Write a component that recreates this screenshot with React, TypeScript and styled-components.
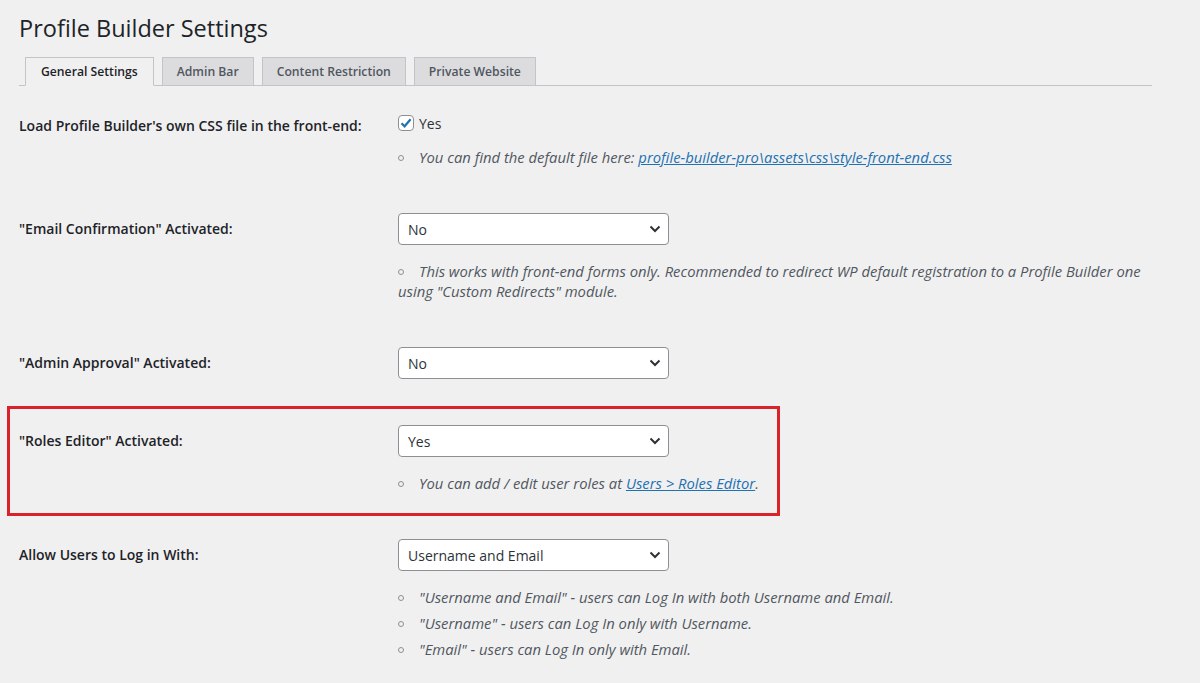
import React from 'react';
import styled, { createGlobalStyle } from 'styled-components';

const GlobalStyle = createGlobalStyle`
  body {
    margin: 0;
    background-color: #f0f0f1;
    font-family: "Open Sans", "Liberation Sans", sans-serif;
    color: #1d2327;
  }
`;

const Wrap = styled.div`
  padding: 14px 48px 0 19px;
`;

const Title = styled.h1`
  margin: 0;
  font-size: 23.5px;
  line-height: 29px;
  font-weight: 400;
  color: #1d2327;
`;

const TabBar = styled.div`
  display: flex;
  gap: 8px;
  margin-top: 14px;
  padding-left: 6px;
  border-bottom: 1px solid #c3c4c7;
`;

const Tab = styled.div<{ $active?: boolean }>`
  margin-bottom: -1px;
  padding: 4px 14px;
  line-height: 19px;
  font-size: 12.2px;
  font-weight: 600;
  border: 1px solid #c3c4c7;
  border-bottom-color: ${p => (p.$active ? '#f0f0f1' : '#c3c4c7')};
  background-color: ${p => (p.$active ? '#f0f0f1' : '#dcdcde')};
  color: ${p => (p.$active ? '#1d2327' : '#50575e')};

  &:first-child {
    padding: 4px 15px;
  }
`;

const Form = styled.div`
  margin-top: 6px;
`;

const Row = styled.div<{ $highlight?: boolean }>`
  position: relative;
  display: grid;
  grid-template-columns: 379px 1fr;
  align-items: start;
  padding: 23px 0;

  ${p =>
    p.$highlight &&
    `
    &::after {
      content: '';
      position: absolute;
      top: 4px;
      bottom: 0;
      left: -12px;
      width: 767px;
      border: 3px solid #d9222a;
      pointer-events: none;
    }
  `}
`;

const Label = styled.div<{ $lh?: number }>`
  font-size: 14px;
  font-weight: 600;
  line-height: ${p => p.$lh ?? 32}px;
  color: #1d2327;
`;

const Control = styled.div`
  display: flex;
  flex-direction: column;
  align-items: flex-start;
`;

const CheckRow = styled.label`
  display: flex;
  align-items: center;
  gap: 5px;
  height: 16px;
  font-size: 14px;
  color: #2c3338;
`;

const CheckBox = styled.span`
  display: flex;
  align-items: center;
  justify-content: center;
  box-sizing: border-box;
  width: 16px;
  height: 16px;
  border: 1px solid #8c8f94;
  border-radius: 4px;
  background-color: #fff;
`;

const SelectWrap = styled.div`
  position: relative;
  width: 271px;
`;

const Select = styled.select`
  appearance: none;
  box-sizing: border-box;
  width: 100%;
  height: 32px;
  padding: 0 24px 0 9px;
  border: 1px solid #8c8f94;
  border-radius: 4px;
  background-color: #fff;
  font-family: inherit;
  font-size: 14px;
  color: #2c3338;
`;

const Chevron = styled.svg`
  position: absolute;
  right: 8px;
  top: 12px;
  pointer-events: none;
`;

const Notes = styled.ul`
  margin: 16px 0 0;
  padding: 0;
  list-style: none;
`;

const Note = styled.li`
  font-size: 14.8px;
  line-height: 20px;
  font-style: italic;
  color: #50575e;

  & + & {
    margin-top: 6px;
  }
`;

const Bullet = styled.span`
  display: inline-block;
  box-sizing: border-box;
  width: 6px;
  height: 6px;
  margin: 0 15px 2px 0;
  border: 1px solid #8c8f94;
  border-radius: 50%;
  vertical-align: middle;
`;

const Link = styled.a`
  color: #2271b1;
  text-decoration: underline;
`;

const Dropdown: React.FC<{ value: string; options: string[] }> = ({ value, options }) => (
  <SelectWrap>
    <Select defaultValue={value}>
      {options.map(o => (
        <option key={o}>{o}</option>
      ))}
    </Select>
    <Chevron width="12" height="8" viewBox="0 0 12 8">
      <path d="M1.5 1.5 L6 6 L10.5 1.5" fill="none" stroke="#2c3338" strokeWidth="2" />
    </Chevron>
  </SelectWrap>
);

const App: React.FC = () => {
  return (
    <>
      <GlobalStyle />
      <Wrap>
        <Title>Profile Builder Settings</Title>
        <TabBar>
          <Tab $active>General Settings</Tab>
          <Tab>Admin Bar</Tab>
          <Tab>Content Restriction</Tab>
          <Tab>Private Website</Tab>
        </TabBar>

        <Form>
          <Row>
            <Label $lh={22}>Load Profile Builder's own CSS file in the front-end:</Label>
            <Control>
              <CheckRow>
                <CheckBox>
                  <svg width="14" height="14" viewBox="0 0 14 14">
                    <path d="M2.5 7.2 L5.6 10.3 L11.6 3.2" fill="none" stroke="#2271b1" strokeWidth="2.2" />
                  </svg>
                </CheckBox>
                Yes
              </CheckRow>
              <Notes>
                <Note>
                  <Bullet />
                  You can find the default file here:{' '}
                  <Link href="#">profile-builder-pro\assets\css\style-front-end.css</Link>
                </Note>
              </Notes>
            </Control>
          </Row>

          <Row>
            <Label>"Email Confirmation" Activated:</Label>
            <Control>
              <Dropdown value="No" options={['No', 'Yes']} />
              <Notes>
                <Note>
                  <Bullet />
                  This works with front-end forms only. Recommended to redirect WP default registration to a Profile Builder one using "Custom Redirects" module.
                </Note>
              </Notes>
            </Control>
          </Row>

          <Row>
            <Label>"Admin Approval" Activated:</Label>
            <Control>
              <Dropdown value="No" options={['No', 'Yes']} />
            </Control>
          </Row>

          <Row $highlight>
            <Label>"Roles Editor" Activated:</Label>
            <Control>
              <Dropdown value="Yes" options={['No', 'Yes']} />
              <Notes>
                <Note>
                  <Bullet />
                  You can add / edit user roles at <Link href="#">Users &gt; Roles Editor</Link>.
                </Note>
              </Notes>
            </Control>
          </Row>

          <Row>
            <Label>Allow Users to Log in With:</Label>
            <Control>
              <Dropdown value="Username and Email" options={['Username and Email', 'Username', 'Email']} />
              <Notes>
                <Note>
                  <Bullet />
                  "Username and Email" - users can Log In with both Username and Email.
                </Note>
                <Note>
                  <Bullet />
                  "Username" - users can Log In only with Username.
                </Note>
                <Note>
                  <Bullet />
                  "Email" - users can Log In only with Email.
                </Note>
              </Notes>
            </Control>
          </Row>
        </Form>
      </Wrap>
    </>
  );
};

export default App;
